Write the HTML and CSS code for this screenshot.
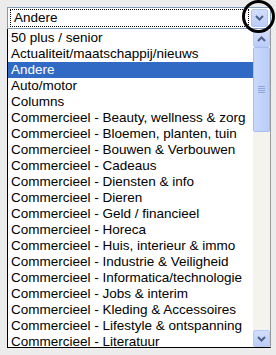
FILE: index.html
```html
<!DOCTYPE html>
<html lang="nl">
<head>
    <meta charset="UTF-8">
    <title>Rubriek</title>
    <link rel="stylesheet" href="styles.css">
</head>
<body>
    <div class="combo">
        <div class="combo-field">
            <span class="combo-value">Andere</span>
            <span class="combo-btn">
                <svg width="9" height="6" viewBox="0 0 9 6"><path d="M1 1 L4.5 4.5 L8 1" fill="none" stroke="#4d6185" stroke-width="2"/></svg>
            </span>
            <span class="marker"></span>
        </div>
        <div class="combo-list">
            <ul class="options">
                <li>50 plus / senior</li>
                <li>Actualiteit/maatschappij/nieuws</li>
                <li class="selected">Andere</li>
                <li>Auto/motor</li>
                <li>Columns</li>
                <li>Commercieel - Beauty, wellness &amp; zorg</li>
                <li>Commercieel - Bloemen, planten, tuin</li>
                <li>Commercieel - Bouwen &amp; Verbouwen</li>
                <li>Commercieel - Cadeaus</li>
                <li>Commercieel - Diensten &amp; info</li>
                <li>Commercieel - Dieren</li>
                <li>Commercieel - Geld / financieel</li>
                <li>Commercieel - Horeca</li>
                <li>Commercieel - Huis, interieur &amp; immo</li>
                <li>Commercieel - Industrie &amp; Veiligheid</li>
                <li>Commercieel - Informatica/technologie</li>
                <li>Commercieel - Jobs &amp; interim</li>
                <li>Commercieel - Kleding &amp; Accessoires</li>
                <li>Commercieel - Lifestyle &amp; ontspanning</li>
                <li>Commercieel - Literatuur</li>
            </ul>
            <div class="scrollbar">
                <span class="sb-btn">
                    <svg width="9" height="6" viewBox="0 0 9 6"><path d="M1 5 L4.5 1.5 L8 5" fill="none" stroke="#4d6185" stroke-width="2"/></svg>
                </span>
                <span class="sb-thumb">
                    <svg width="7" height="7" viewBox="0 0 7 7"><path d="M0 0.5 H7 M0 2.5 H7 M0 4.5 H7 M0 6.5 H7" stroke="#8ea6dc" stroke-width="1"/></svg>
                </span>
                <span class="sb-track"></span>
                <span class="sb-btn">
                    <svg width="9" height="6" viewBox="0 0 9 6"><path d="M1 1 L4.5 4.5 L8 1" fill="none" stroke="#4d6185" stroke-width="2"/></svg>
                </span>
            </div>
        </div>
    </div>
</body>
</html>
```

FILE: styles.css
```css
* {
    margin: 0;
    padding: 0;
    box-sizing: border-box;
}

body {
    font-family: "Liberation Sans", Arial, sans-serif;
    font-size: 13px;
    background: #ececec;
    padding: 7px 5px 0 7px;
    height: 355px;
    overflow: hidden;
}

.combo {
    width: 264px;
}

.combo-field {
    position: relative;
    display: flex;
    align-items: center;
    height: 22px;
    background: #fff;
    border: 1px solid #7f9db9;
    padding: 1px 2px 1px 2px;
    gap: 2px;
}

.combo-value {
    flex: 1;
    height: 18px;
    line-height: 16px;
    padding-left: 3px;
    font-size: 13.5px;
    border: 1px dotted #000;
}

.combo-btn {
    width: 17px;
    height: 18px;
    display: flex;
    align-items: center;
    justify-content: center;
    background: linear-gradient(#d2defc, #bccdfa);
    border: 1px solid #b3c5f0;
    border-radius: 2px;
}

.marker {
    position: absolute;
    right: -5px;
    top: -8px;
    width: 33px;
    height: 33px;
    border: 3.5px solid #000;
    border-radius: 50%;
}

.combo-list {
    display: flex;
    height: 319px;
    background: #fff;
    border: 1px solid #000;
    border-top: none;
    border-right-color: #9a9a9a;
}

.options {
    flex: 1;
    list-style: none;
    overflow: hidden;
    margin-top: 1px;
}

.options li {
    height: 16px;
    line-height: 16px;
    padding-left: 3px;
    font-size: 13.5px;
    white-space: nowrap;
    color: #000;
}

.options li.selected {
    background: #316ac5;
    color: #fff;
}

.scrollbar {
    width: 17px;
    display: flex;
    flex-direction: column;
    background: #f4f3ee;
    margin-top: 1px;
}

.sb-btn {
    height: 17px;
    display: flex;
    align-items: center;
    justify-content: center;
    background: linear-gradient(#d2defc, #bccdfa);
    border: 1px solid #b9caf3;
    border-radius: 2px;
}

.sb-thumb {
    height: 85px;
    display: flex;
    align-items: center;
    justify-content: center;
    background: linear-gradient(90deg, #c9d8fc, #bbcdf8);
    border: 1px solid #a9bdf0;
    border-radius: 2px;
}

.sb-track {
    flex: 1;
}
```
